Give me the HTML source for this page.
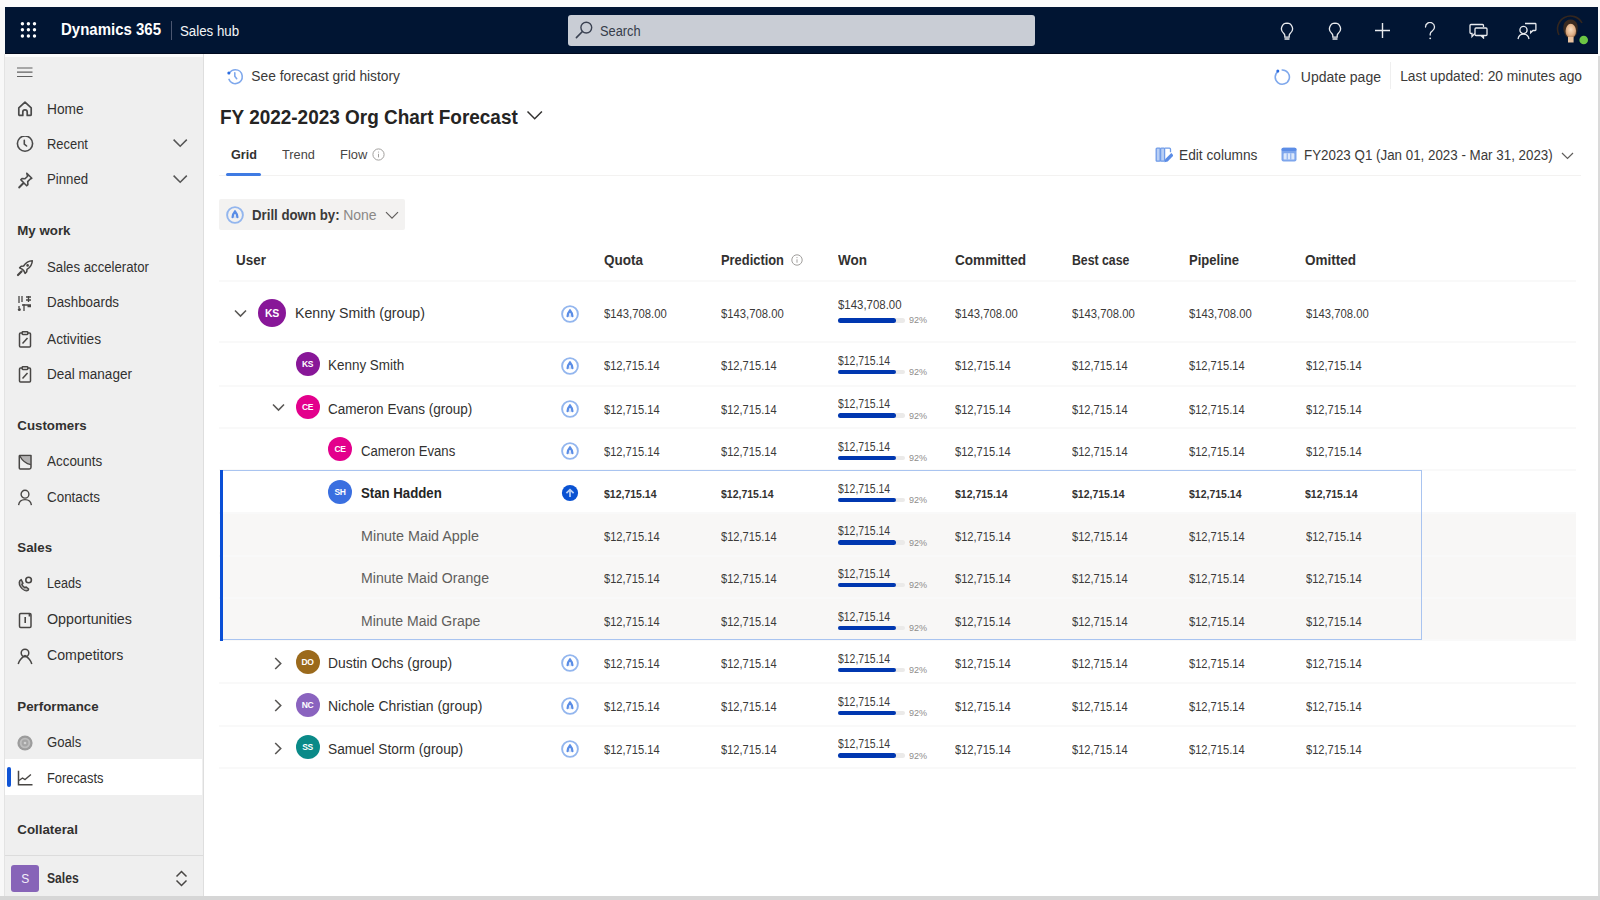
<!DOCTYPE html>
<html><head><meta charset="utf-8"><title>Dynamics 365 Sales hub - Forecast</title>
<style>
html,body{margin:0;padding:0}
body{width:1600px;height:900px;position:relative;overflow:hidden;background:#ffffff;font-family:"Liberation Sans",sans-serif}
.t{position:absolute;white-space:nowrap;line-height:normal;font-family:"Liberation Sans",sans-serif}
.r{position:absolute;display:block}
.av{position:absolute;border-radius:50%;color:#fff;text-align:center;font-family:"Liberation Sans",sans-serif;font-weight:700;letter-spacing:-0.4px}
</style></head><body>
<div class="r" style="left:1598.00px;top:0.00px;width:2.00px;height:56.00px;background:#fafafa;"></div>
<div class="r" style="left:1597.80px;top:56.00px;width:2.20px;height:844.00px;background:#dadada;"></div>
<div class="r" style="left:0.00px;top:896.00px;width:1600.00px;height:4.00px;background:#d6d6d6;"></div>
<div class="r" style="left:0.00px;top:0.00px;width:5.00px;height:896.00px;background:#f8f8f8;"></div>
<div class="r" style="left:0.00px;top:0.00px;width:1600.00px;height:7.00px;background:#fafafa;"></div>
<div class="r" style="left:5.00px;top:7.00px;width:1593.00px;height:47.00px;background:#011533;"></div>
<div class="r" style="left:5.00px;top:52.50px;width:1593.00px;height:1.50px;background:#000a1f;"></div>
<svg class="r" style="left:0.00px;top:0.00px;" width="50" height="50" viewBox="0 0 50 50" fill="none"><circle cx="22.4" cy="23.8" r="1.7" fill="#fff"/><circle cx="22.4" cy="29.8" r="1.7" fill="#fff"/><circle cx="22.4" cy="36" r="1.7" fill="#fff"/><circle cx="28.4" cy="23.8" r="1.7" fill="#fff"/><circle cx="28.4" cy="29.8" r="1.7" fill="#fff"/><circle cx="28.4" cy="36" r="1.7" fill="#fff"/><circle cx="34.5" cy="23.8" r="1.7" fill="#fff"/><circle cx="34.5" cy="29.8" r="1.7" fill="#fff"/><circle cx="34.5" cy="36" r="1.7" fill="#fff"/></svg>
<div class="t" style="left:61.30px;top:21.32px;font-size:16px;font-weight:700;color:#ffffff;transform:scaleX(0.937);transform-origin:0 0;">Dynamics 365</div>
<div class="r" style="left:170.50px;top:21.00px;width:1.00px;height:18.50px;background:#4b5670;"></div>
<div class="t" style="left:179.60px;top:23.13px;font-size:14px;font-weight:400;color:#f4f5f7;transform:scaleX(0.95);transform-origin:0 0;">Sales hub</div>
<div class="r" style="left:568.20px;top:14.90px;width:467.00px;height:30.80px;background:#c9cdd5;border-radius:3px"></div>
<svg class="r" style="left:574.00px;top:19.00px;" width="22" height="22" viewBox="0 0 22 22" fill="none"><circle cx="12.3" cy="8.6" r="5.4" stroke="#3b4252" stroke-width="1.4"/><line x1="8.4" y1="12.5" x2="2.4" y2="18.6" stroke="#3b4252" stroke-width="1.6" stroke-linecap="round"/></svg>
<div class="t" style="left:600.10px;top:23.81px;font-size:13.8px;font-weight:400;color:#353c4a;transform:scaleX(0.93);transform-origin:0 0;">Search</div>
<svg class="r" style="left:1279.60px;top:21.50px;" width="14" height="19" viewBox="0 0 14 19" fill="none"><path d="M7 1.2a5.6 5.6 0 0 0-3.4 10c.8.7 1.2 1.5 1.2 2.4v1.6h4.4v-1.6c0-.9.4-1.7 1.2-2.4A5.6 5.6 0 0 0 7 1.2z" stroke="#e8eaee" stroke-width="1.3"/><path d="M5 17h4" stroke="#e8eaee" stroke-width="1.4" stroke-linecap="round"/></svg>
<svg class="r" style="left:1327.50px;top:21.50px;" width="14" height="19" viewBox="0 0 14 19" fill="none"><path d="M7 1.2a5.6 5.6 0 0 0-3.4 10c.8.7 1.2 1.5 1.2 2.4v1.6h4.4v-1.6c0-.9.4-1.7 1.2-2.4A5.6 5.6 0 0 0 7 1.2z" stroke="#e8eaee" stroke-width="1.3"/><path d="M5 17h4" stroke="#e8eaee" stroke-width="1.4" stroke-linecap="round"/></svg>
<svg class="r" style="left:1373.50px;top:21.50px;" width="17" height="17" viewBox="0 0 17 17" fill="none"><path d="M8.5 1v15M1 8.5h15" stroke="#e8eaee" stroke-width="1.4"/></svg>
<svg class="r" style="left:1423.50px;top:21.50px;" width="12" height="18" viewBox="0 0 12 18" fill="none"><path d="M1.5 5a4.5 4.5 0 1 1 7 3.7c-1.3.9-2.3 1.7-2.3 3.3v1" stroke="#e8eaee" stroke-width="1.3" stroke-linecap="round"/><circle cx="6.2" cy="16.3" r=".9" fill="#e8eaee"/></svg>
<svg class="r" style="left:1469.00px;top:22.00px;" width="19" height="17" viewBox="0 0 19 17" fill="none"><path d="M2 2.5h11.5c.6 0 1 .4 1 1V5" stroke="#e8eaee" stroke-width="1.3"/><path d="M2 2.5c-.6 0-1 .4-1 1v7c0 .6.4 1 1 1h1v3l2.8-3" stroke="#e8eaee" stroke-width="1.3"/><rect x="6" y="6" width="12" height="7.5" rx="1" stroke="#e8eaee" stroke-width="1.3"/><path d="M14.5 13.5v2.5l-2.5-2.5" stroke="#e8eaee" stroke-width="1.3"/></svg>
<svg class="r" style="left:1516.50px;top:21.50px;" width="20" height="18" viewBox="0 0 20 18" fill="none"><circle cx="6.5" cy="8" r="3.6" stroke="#e8eaee" stroke-width="1.3"/><path d="M1 17c.6-3 2.8-4.8 5.5-4.8S11.4 14 12 17" stroke="#e8eaee" stroke-width="1.3"/><path d="M8 1.5h10.2c.4 0 .7.3.7.7v5.6c0 .4-.3.7-.7.7H16l-2.3 2.3V8.5" stroke="#e8eaee" stroke-width="1.3"/></svg>
<svg class="r" style="left:1555.00px;top:15.00px;" width="34" height="34" viewBox="0 0 34 34" fill="none"><defs><radialGradient id="fg" cx="50%" cy="40%" r="60%"><stop offset="0" stop-color="#f6dcc0"/><stop offset="0.6" stop-color="#e3b48c"/><stop offset="1" stop-color="#b5845f"/></radialGradient></defs><path d="M4 20A12.8 12.8 0 0 1 27 8" stroke="#33261e" stroke-width="1.6"/><path d="M8.6 10c1-3.8 3.6-5.6 7-5.6s6 1.9 6.8 5.4c.6 2.7.3 6.2-.6 9-1 2.6-3.1 4.6-6.2 4.6s-5.1-2-6.1-4.8C8.3 15.8 8 12.8 8.6 10z" fill="#3a2a20"/><ellipse cx="15.8" cy="16" rx="5.3" ry="7.2" fill="url(#fg)"/><path d="M13 22h5.6v5.5H13z" fill="#e9c29f"/><circle cx="28.7" cy="25" r="5.4" fill="#011533"/><circle cx="28.7" cy="25" r="4.3" fill="#6cc644"/></svg>
<div class="r" style="left:4.00px;top:54.00px;width:1.20px;height:842.00px;background:#e3e3e3;"></div>
<div class="r" style="left:5.00px;top:54.00px;width:198.00px;height:842.00px;background:#efefef;"></div>
<div class="r" style="left:5.00px;top:54.00px;width:198.00px;height:3.00px;background:#fbfbfb;"></div>
<div class="r" style="left:202.60px;top:54.00px;width:1.50px;height:842.00px;background:#dedede;"></div>
<svg class="r" style="left:16.00px;top:66.00px;" width="18" height="13" viewBox="0 0 18 13" fill="none"><path d="M1 2h15.5M1 6.2h15.5M1 10.5h15.5" stroke="#616161" stroke-width="1.2"/></svg>
<div class="t" style="left:47.20px;top:101.51px;font-size:13.8px;font-weight:400;color:#323130;transform:scaleX(0.995);transform-origin:0 0;">Home</div>
<svg class="r" style="left:16.00px;top:100.00px;" width="18" height="18" viewBox="0 0 18 18" fill="none"><path d="M2.8 7.8 9 2.2l6.2 5.6v6.6c0 .6-.4 1-1 1h-3V12a2.2 2.2 0 0 0-4.4 0v3.4H3.8c-.6 0-1-.4-1-1z" stroke="#4a4a4a" stroke-width="1.7" stroke-linejoin="round"/></svg>
<div class="t" style="left:47.20px;top:137.41px;font-size:13.8px;font-weight:400;color:#323130;transform:scaleX(0.936);transform-origin:0 0;">Recent</div>
<svg class="r" style="left:16.00px;top:135.90px;" width="18" height="18" viewBox="0 0 18 18" fill="none"><circle cx="9" cy="7.6" r="7.6" stroke="#4a4a4a" stroke-width="1.6"/><path d="M8.3 4.2v3.9l2.3 1.9" stroke="#4a4a4a" stroke-width="1.6" stroke-linecap="round"/></svg>
<div class="t" style="left:47.20px;top:172.41px;font-size:13.8px;font-weight:400;color:#323130;transform:scaleX(0.958);transform-origin:0 0;">Pinned</div>
<svg class="r" style="left:16.00px;top:170.90px;" width="18" height="18" viewBox="0 0 18 18" fill="none"><path d="M10.8 2.2l5 5-1.5.8-2.6 2.6.2 3-1.2 1.2-2.8-2.8L3.2 16.6l-.2-.2 4.6-4.8-2.8-2.8 1.2-1.2 3 .2 2.6-2.6z" stroke="#4a4a4a" stroke-width="1.6" stroke-linejoin="round"/></svg>
<svg class="r" style="left:172.00px;top:137.80px;" width="17" height="10" viewBox="0 0 17 10" fill="none"><path d="M1.6 1.6l6.6 6.6 6.6-6.6" stroke="#555" stroke-width="1.5"/></svg>
<svg class="r" style="left:172.00px;top:173.60px;" width="17" height="10" viewBox="0 0 17 10" fill="none"><path d="M1.6 1.6l6.6 6.6 6.6-6.6" stroke="#555" stroke-width="1.5"/></svg>
<div class="t" style="left:17.30px;top:223.46px;font-size:13.3px;font-weight:700;color:#323130;">My work</div>
<div class="t" style="left:47.20px;top:260.31px;font-size:13.8px;font-weight:400;color:#323130;transform:scaleX(0.957);transform-origin:0 0;">Sales accelerator</div>
<svg class="r" style="left:16.00px;top:258.80px;" width="18" height="18" viewBox="0 0 18 18" fill="none"><path d="M16.3 1.7c-3.6.1-6.5 1.9-8.7 5.3L5.2 7.3 3.6 8.9l2.5 1.2 1.8 1.8 1.2 2.5 1.6-1.6.3-2.4c3.4-2.2 5.2-5.1 5.3-8.7z" stroke="#484644" stroke-width="1.5" stroke-linejoin="round"/><circle cx="11.6" cy="6.4" r="1.3" fill="#484644"/><path d="M5.5 12.5 2 16" stroke="#484644" stroke-width="2.2" stroke-linecap="round"/></svg>
<div class="t" style="left:47.20px;top:295.31px;font-size:13.8px;font-weight:400;color:#323130;transform:scaleX(0.968);transform-origin:0 0;">Dashboards</div>
<svg class="r" style="left:16.00px;top:293.80px;" width="18" height="18" viewBox="0 0 18 18" fill="none"><path d="M3 2v7M6 2v6M10 3h5M10 6h5M12.5 2v6M6 11h9M3 12v2M8 10v7M11.5 12.5h3.5" stroke="#484644" stroke-width="1.3"/><circle cx="3.3" cy="15.5" r="1.5" fill="#484644"/></svg>
<div class="t" style="left:47.20px;top:331.51px;font-size:13.8px;font-weight:400;color:#323130;transform:scaleX(0.993);transform-origin:0 0;">Activities</div>
<svg class="r" style="left:16.00px;top:330.00px;" width="18" height="18" viewBox="0 0 18 18" fill="none"><path d="M6.2 3H4.5a1 1 0 0 0-1 1v12a1 1 0 0 0 1 1h9a1 1 0 0 0 1-1V4a1 1 0 0 0-1-1h-1.7" stroke="#484644" stroke-width="1.5"/><rect x="6.2" y="1.8" width="5.6" height="2.6" rx=".6" stroke="#484644" stroke-width="1.5"/><path d="M6.5 13.5l5-5.5" stroke="#484644" stroke-width="1.5"/></svg>
<div class="t" style="left:47.20px;top:366.51px;font-size:13.8px;font-weight:400;color:#323130;transform:scaleX(0.98);transform-origin:0 0;">Deal manager</div>
<svg class="r" style="left:16.00px;top:365.00px;" width="18" height="18" viewBox="0 0 18 18" fill="none"><path d="M6.2 3H4.5a1 1 0 0 0-1 1v12a1 1 0 0 0 1 1h9a1 1 0 0 0 1-1V4a1 1 0 0 0-1-1h-1.7" stroke="#484644" stroke-width="1.5"/><rect x="6.2" y="1.8" width="5.6" height="2.6" rx=".6" stroke="#484644" stroke-width="1.5"/><path d="M6.5 13.5l5-5.5" stroke="#484644" stroke-width="1.5"/></svg>
<div class="t" style="left:17.30px;top:417.86px;font-size:13.3px;font-weight:700;color:#323130;">Customers</div>
<div class="t" style="left:47.20px;top:454.01px;font-size:13.8px;font-weight:400;color:#323130;transform:scaleX(0.974);transform-origin:0 0;">Accounts</div>
<svg class="r" style="left:16.00px;top:452.50px;" width="18" height="18" viewBox="0 0 18 18" fill="none"><path d="M3.5 2.5h11.5v11.8c0 1-.6 1.7-1.6 1.7H4.2c-.5 0-.9-.4-.9-.9V3.2z" stroke="#484644" stroke-width="1.5" stroke-linejoin="round"/><path d="M3.8 3c2.4 4.5 6 7.7 11 8.6" stroke="#484644" stroke-width="1.3"/><path d="M4 3.2l10.8.2-.2 8c-4.6-1-8.2-4-10.6-8.2z" fill="#484644" opacity=".35"/></svg>
<div class="t" style="left:47.20px;top:489.71px;font-size:13.8px;font-weight:400;color:#323130;transform:scaleX(0.972);transform-origin:0 0;">Contacts</div>
<svg class="r" style="left:16.00px;top:488.20px;" width="18" height="18" viewBox="0 0 18 18" fill="none"><circle cx="9" cy="6.2" r="3.9" stroke="#484644" stroke-width="1.4"/><path d="M2.6 17.2c.4-3.4 3-5.6 6.4-5.6s6 2.2 6.4 5.6" stroke="#484644" stroke-width="1.4"/></svg>
<div class="t" style="left:17.30px;top:539.96px;font-size:13.3px;font-weight:700;color:#323130;">Sales</div>
<div class="t" style="left:47.20px;top:576.01px;font-size:13.8px;font-weight:400;color:#323130;transform:scaleX(0.912);transform-origin:0 0;">Leads</div>
<svg class="r" style="left:16.00px;top:574.50px;" width="18" height="18" viewBox="0 0 18 18" fill="none"><circle cx="12.6" cy="5" r="2.8" stroke="#484644" stroke-width="1.6"/><path d="M5.2 4.6C3 5.6 2.4 8.6 4.6 11.8s5.4 4.6 7.4 3.6l.6-1.3-2.4-2.2-1.4.7c-1.3-.7-2.3-1.8-2.9-3.1l1.1-1.3z" stroke="#484644" stroke-width="1.4" stroke-linejoin="round" fill="#484644" fill-opacity=".35"/></svg>
<div class="t" style="left:47.20px;top:612.01px;font-size:13.8px;font-weight:400;color:#323130;transform:scaleX(1.035);transform-origin:0 0;">Opportunities</div>
<svg class="r" style="left:16.00px;top:610.50px;" width="18" height="18" viewBox="0 0 18 18" fill="none"><rect x="3.5" y="2.5" width="11.5" height="14" rx="1.2" stroke="#484644" stroke-width="1.5"/><path d="M9.2 6v6" stroke="#484644" stroke-width="1.6"/><path d="M13.5 2.5v3" stroke="#484644" stroke-width="1.8"/></svg>
<div class="t" style="left:47.20px;top:648.21px;font-size:13.8px;font-weight:400;color:#323130;transform:scaleX(1.026);transform-origin:0 0;">Competitors</div>
<svg class="r" style="left:16.00px;top:646.70px;" width="18" height="18" viewBox="0 0 18 18" fill="none"><circle cx="9" cy="6" r="3.8" stroke="#484644" stroke-width="1.5"/><path d="M2.2 17c.9-3.5 3.4-6.2 6.8-8.6M15.8 17c-.9-3.5-3.4-6.2-6.8-8.6" stroke="#484644" stroke-width="1.5"/></svg>
<div class="t" style="left:17.30px;top:698.76px;font-size:13.3px;font-weight:700;color:#323130;">Performance</div>
<div class="t" style="left:47.20px;top:735.01px;font-size:13.8px;font-weight:400;color:#323130;transform:scaleX(0.953);transform-origin:0 0;">Goals</div>
<svg class="r" style="left:16.00px;top:733.50px;" width="18" height="18" viewBox="0 0 18 18" fill="none"><circle cx="9" cy="9" r="7.6" fill="#9c9c9c"/><circle cx="9" cy="9" r="5.3" fill="#bdbdbd"/><circle cx="9" cy="9" r="3.4" fill="#a5a5a5"/><circle cx="9" cy="9" r="1.3" fill="#d0d0d0"/></svg>
<div class="r" style="left:5.00px;top:759.00px;width:197.20px;height:36.00px;background:#ffffff;"></div>
<div class="r" style="left:7.00px;top:766.80px;width:4.00px;height:20.00px;background:#0f54d6;border-radius:2px"></div>
<div class="t" style="left:47.20px;top:770.71px;font-size:13.8px;font-weight:400;color:#323130;transform:scaleX(0.931);transform-origin:0 0;">Forecasts</div>
<svg class="r" style="left:16.00px;top:769.20px;" width="18" height="18" viewBox="0 0 18 18" fill="none"><path d="M2.5 1.8V15.8h14" stroke="#484644" stroke-width="1.5"/><path d="M3 11.5 6.5 9l2.6 1.6 5.8-5.2" stroke="#484644" stroke-width="1.4" stroke-linejoin="round"/></svg>
<div class="t" style="left:17.30px;top:821.71px;font-size:13.3px;font-weight:700;color:#323130;">Collateral</div>
<div class="r" style="left:5.00px;top:855.30px;width:197.60px;height:1.00px;background:#dcdcdc;"></div>
<div class="r" style="left:11.20px;top:864.50px;width:27.50px;height:27.00px;background:#8764b8;border-radius:3px"></div>
<div class="t" style="left:21.20px;top:872.34px;font-size:12px;font-weight:400;color:#f3eefa;">S</div>
<div class="t" style="left:47.00px;top:871.26px;font-size:13.8px;font-weight:700;color:#323130;transform:scaleX(0.88);transform-origin:0 0;">Sales</div>
<svg class="r" style="left:174.50px;top:869.50px;" width="13" height="17" viewBox="0 0 13 17" fill="none"><path d="M1.5 6.5 6.5 1.5l5 5M1.5 10.5l5 5 5-5" stroke="#484644" stroke-width="1.5"/></svg>
<svg class="r" style="left:226.00px;top:66.50px;" width="19" height="19" viewBox="0 0 19 19" fill="none"><path d="M3.2 6.5C4.5 4.3 6.8 2.8 9.3 2.8a6.9 6.9 0 1 1-6.3 9.6" stroke="#7fa8ec" stroke-width="1.6" stroke-linecap="round"/><circle cx="2.8" cy="5.9" r="1.5" fill="#2a6be0"/><path d="M8.8 5.8v3.5l1.9 2.4" stroke="#7fa8ec" stroke-width="1.6" stroke-linecap="round"/></svg>
<div class="t" style="left:251.25px;top:68.76px;font-size:13.8px;font-weight:400;color:#3b3a39;">See forecast grid history</div>
<svg class="r" style="left:1272.50px;top:67.50px;" width="18" height="18" viewBox="0 0 18 18" fill="none"><path d="M5.2 3.3A7.1 7.1 0 1 0 9.2 2" stroke="#7fa8ec" stroke-width="1.6" stroke-linecap="round"/><circle cx="4.8" cy="3" r="1.5" fill="#2a6be0"/></svg>
<div class="t" style="left:1300.80px;top:68.83px;font-size:14px;font-weight:400;color:#3b3a39;">Update page</div>
<div class="r" style="left:1390.30px;top:62.00px;width:1.00px;height:26.70px;background:#efefef;"></div>
<div class="t" style="left:1400.20px;top:69.01px;font-size:13.8px;font-weight:400;color:#3b3a39;">Last updated: 20 minutes ago</div>
<div class="t" style="left:220.25px;top:105.83px;font-size:19.8px;font-weight:700;color:#252423;transform:scaleX(0.958);transform-origin:0 0;">FY 2022-2023 Org Chart Forecast</div>
<svg class="r" style="left:525.50px;top:109.50px;" width="18" height="11" viewBox="0 0 18 11" fill="none"><path d="M1.5 1.5l7.2 7.2 7.2-7.2" stroke="#323130" stroke-width="1.5"/></svg>
<div class="r" style="left:219.00px;top:175.00px;width:1362.00px;height:1.00px;background:#f3f2f1;"></div>
<div class="t" style="left:230.60px;top:147.26px;font-size:13.3px;font-weight:700;color:#323130;transform:scaleX(0.95);transform-origin:0 0;">Grid</div>
<div class="t" style="left:282.25px;top:147.26px;font-size:13.3px;font-weight:400;color:#484644;transform:scaleX(0.96);transform-origin:0 0;">Trend</div>
<div class="t" style="left:340.00px;top:147.26px;font-size:13.3px;font-weight:400;color:#484644;transform:scaleX(0.97);transform-origin:0 0;">Flow</div>
<svg class="r" style="left:372.00px;top:147.50px;" width="13" height="13" viewBox="0 0 13 13" fill="none"><circle cx="6.5" cy="6.5" r="5.6" stroke="#a19f9d" stroke-width="1"/><path d="M6.5 5.8v3.6" stroke="#a19f9d" stroke-width="1"/><circle cx="6.5" cy="4" r=".6" fill="#a19f9d"/></svg>
<div class="r" style="left:225.75px;top:173.00px;width:35.70px;height:3.20px;background:#3f7be3;border-radius:2px"></div>
<svg class="r" style="left:1154.50px;top:146.50px;" width="18" height="18" viewBox="0 0 18 18" fill="none"><rect x="1.2" y="1.2" width="4" height="13" rx=".8" fill="#b9cff5" stroke="#6f9be8" stroke-width="1.3"/><rect x="5.6" y="1.2" width="4" height="13" rx=".8" fill="#b9cff5" stroke="#6f9be8" stroke-width="1.3"/><path d="M10 1.2h4.5a1 1 0 0 1 1 1v3" stroke="#6f9be8" stroke-width="1.3"/><path d="M16.3 6 10.3 12l-.9 3.3 3.3-.9 6-6z" fill="#5b8ce6"/></svg>
<div class="t" style="left:1179.40px;top:147.33px;font-size:14px;font-weight:400;color:#3b3a39;transform:scaleX(0.979);transform-origin:0 0;">Edit columns</div>
<svg class="r" style="left:1281.00px;top:146.50px;" width="16" height="15" viewBox="0 0 16 15" fill="none"><rect x=".5" y=".8" width="15" height="13.7" rx="2" fill="#7ea6ec"/><rect x="0.5" y=".8" width="15" height="3.2" rx="1.5" fill="#5c8de6"/><rect x="2.6" y="6.3" width="10.8" height="6.2" rx=".6" fill="#dce8fb"/><path d="M6.2 6.3v6.2M9.8 6.3v6.2" stroke="#7ea6ec" stroke-width="1"/></svg>
<div class="t" style="left:1303.90px;top:147.33px;font-size:14px;font-weight:400;color:#3b3a39;transform:scaleX(0.954);transform-origin:0 0;">FY2023 Q1 (Jan 01, 2023 - Mar 31, 2023)</div>
<svg class="r" style="left:1560.50px;top:151.50px;" width="13" height="8" viewBox="0 0 13 8" fill="none"><path d="M1 1l5.5 5.5L12 1" stroke="#605e5c" stroke-width="1.2"/></svg>
<div class="r" style="left:219.20px;top:198.50px;width:186.30px;height:31.50px;background:#f3f2f1;border-radius:2px"></div>
<svg class="r" style="left:226.40px;top:205.60px;" width="18" height="18" viewBox="0 0 18 18" fill="none"><circle cx="9" cy="9" r="7.9" stroke="#93b6ee" stroke-width="1.9"/><path d="M6.6 11.2C6.6 8.4 9 5.6 9 5.6S11.4 8.4 11.4 11.2" stroke="#5a8de6" stroke-width="2.3" stroke-linecap="round"/><path d="M9 9.2v3" stroke="#c4d6f5" stroke-width="1.2"/></svg>
<div class="t" style="left:251.70px;top:206.53px;font-size:14px;font-weight:700;color:#3b3a39;transform:scaleX(0.946);transform-origin:0 0;">Drill down by:</div>
<div class="t" style="left:343.20px;top:206.53px;font-size:14px;font-weight:400;color:#8a8886;">None</div>
<svg class="r" style="left:385.00px;top:211.00px;" width="14" height="9" viewBox="0 0 14 9" fill="none"><path d="M1 1.2l6 6 6-6" stroke="#605e5c" stroke-width="1.2"/></svg>
<div class="t" style="left:235.75px;top:252.03px;font-size:14px;font-weight:700;color:#323130;transform:scaleX(0.96);transform-origin:0 0;">User</div>
<div class="t" style="left:603.75px;top:252.03px;font-size:14px;font-weight:700;color:#323130;transform:scaleX(0.965);transform-origin:0 0;">Quota</div>
<div class="t" style="left:721.00px;top:252.03px;font-size:14px;font-weight:700;color:#323130;transform:scaleX(0.92);transform-origin:0 0;">Prediction</div>
<div class="t" style="left:837.50px;top:252.03px;font-size:14px;font-weight:700;color:#323130;transform:scaleX(0.963);transform-origin:0 0;">Won</div>
<div class="t" style="left:954.70px;top:252.03px;font-size:14px;font-weight:700;color:#323130;transform:scaleX(0.971);transform-origin:0 0;">Committed</div>
<div class="t" style="left:1071.70px;top:252.03px;font-size:14px;font-weight:700;color:#323130;transform:scaleX(0.876);transform-origin:0 0;">Best case</div>
<div class="t" style="left:1188.60px;top:252.03px;font-size:14px;font-weight:700;color:#323130;transform:scaleX(0.931);transform-origin:0 0;">Pipeline</div>
<div class="t" style="left:1305.40px;top:252.03px;font-size:14px;font-weight:700;color:#323130;transform:scaleX(0.964);transform-origin:0 0;">Omitted</div>
<svg class="r" style="left:791.00px;top:254.00px;" width="12" height="12" viewBox="0 0 12 12" fill="none"><circle cx="6" cy="6" r="5.2" stroke="#a19f9d" stroke-width="1"/><path d="M6 5.3v3.4" stroke="#a19f9d" stroke-width="1"/><circle cx="6" cy="3.6" r=".6" fill="#a19f9d"/></svg>
<div class="r" style="left:219.00px;top:279.70px;width:1357.00px;height:2.00px;background:#f9f9f9;"></div>
<div class="r" style="left:220.00px;top:512.60px;width:1356.00px;height:127.40px;background:#f8f7f6;"></div>
<div class="r" style="left:219.00px;top:341.40px;width:1357.00px;height:2.00px;background:#f9f9f9;"></div>
<div class="r" style="left:219.00px;top:385.00px;width:1357.00px;height:2.00px;background:#f9f9f9;"></div>
<div class="r" style="left:219.00px;top:427.40px;width:1357.00px;height:2.00px;background:#f9f9f9;"></div>
<div class="r" style="left:219.00px;top:469.40px;width:1357.00px;height:2.00px;background:#f9f9f9;"></div>
<div class="r" style="left:219.00px;top:512.00px;width:1357.00px;height:2.00px;background:#f9f9f9;"></div>
<div class="r" style="left:219.00px;top:554.60px;width:1357.00px;height:2.00px;background:#f9f9f9;"></div>
<div class="r" style="left:219.00px;top:597.20px;width:1357.00px;height:2.00px;background:#f9f9f9;"></div>
<div class="r" style="left:219.00px;top:639.40px;width:1357.00px;height:2.00px;background:#f9f9f9;"></div>
<div class="r" style="left:219.00px;top:682.40px;width:1357.00px;height:2.00px;background:#f9f9f9;"></div>
<div class="r" style="left:219.00px;top:725.00px;width:1357.00px;height:2.00px;background:#f9f9f9;"></div>
<div class="r" style="left:219.00px;top:767.40px;width:1357.00px;height:2.00px;background:#f9f9f9;"></div>
<svg class="r" style="left:234.00px;top:308.50px;" width="13" height="9" viewBox="0 0 13 9" fill="none"><path d="M1 1.5l5.5 5.5L12 1.5" stroke="#5a5856" stroke-width="1.6"/></svg>
<div class="av" style="left:258.00px;top:298.50px;width:28px;height:28px;background:#881798;font-size:10.5px;line-height:29.5px">KS</div>
<div class="t" style="left:294.75px;top:304.83px;font-size:14px;font-weight:400;color:#323130;transform:scaleX(1.012);transform-origin:0 0;">Kenny Smith (group)</div>
<svg class="r" style="left:561.40px;top:304.60px;" width="18" height="18" viewBox="0 0 18 18" fill="none"><circle cx="9" cy="9" r="7.9" stroke="#93b6ee" stroke-width="1.9"/><path d="M6.6 11.2C6.6 8.4 9 5.6 9 5.6S11.4 8.4 11.4 11.2" stroke="#5a8de6" stroke-width="2.3" stroke-linecap="round"/><path d="M9 9.2v3" stroke="#c4d6f5" stroke-width="1.2"/></svg>
<div class="t" style="left:603.75px;top:307.14px;font-size:12px;font-weight:400;color:#3b3a39;transform:scaleX(0.9400299850074962);transform-origin:0 0;">$143,708.00</div>
<div class="t" style="left:721.00px;top:307.14px;font-size:12px;font-weight:400;color:#3b3a39;transform:scaleX(0.9400299850074962);transform-origin:0 0;">$143,708.00</div>
<div class="t" style="left:837.50px;top:297.89px;font-size:12px;font-weight:400;color:#3b3a39;transform:scaleX(0.952);transform-origin:0 0;">$143,708.00</div>
<div class="r" style="left:837.50px;top:318.00px;width:67.00px;height:4.60px;background:#ebeae9;border-radius:3px"></div>
<div class="r" style="left:837.50px;top:318.00px;width:58.30px;height:4.60px;background:#0037b0;border-radius:3px"></div>
<div class="t" style="left:909.00px;top:314.20px;font-size:9.5px;font-weight:400;color:#8f8d8b;transform:scaleX(0.95);transform-origin:0 0;">92%</div>
<div class="t" style="left:954.70px;top:307.14px;font-size:12px;font-weight:400;color:#3b3a39;transform:scaleX(0.9400299850074962);transform-origin:0 0;">$143,708.00</div>
<div class="t" style="left:1071.70px;top:307.14px;font-size:12px;font-weight:400;color:#3b3a39;transform:scaleX(0.9400299850074962);transform-origin:0 0;">$143,708.00</div>
<div class="t" style="left:1188.60px;top:307.14px;font-size:12px;font-weight:400;color:#3b3a39;transform:scaleX(0.9400299850074962);transform-origin:0 0;">$143,708.00</div>
<div class="t" style="left:1306.20px;top:307.14px;font-size:12px;font-weight:400;color:#3b3a39;transform:scaleX(0.9400299850074962);transform-origin:0 0;">$143,708.00</div>
<div class="av" style="left:295.50px;top:352.10px;width:24px;height:24px;background:#881798;font-size:8.5px;line-height:25.5px">KS</div>
<div class="t" style="left:328.00px;top:356.93px;font-size:14px;font-weight:400;color:#323130;transform:scaleX(0.96);transform-origin:0 0;">Kenny Smith</div>
<svg class="r" style="left:561.40px;top:356.70px;" width="18" height="18" viewBox="0 0 18 18" fill="none"><circle cx="9" cy="9" r="7.9" stroke="#93b6ee" stroke-width="1.9"/><path d="M6.6 11.2C6.6 8.4 9 5.6 9 5.6S11.4 8.4 11.4 11.2" stroke="#5a8de6" stroke-width="2.3" stroke-linecap="round"/><path d="M9 9.2v3" stroke="#c4d6f5" stroke-width="1.2"/></svg>
<div class="t" style="left:603.75px;top:359.14px;font-size:12px;font-weight:400;color:#3b3a39;transform:scaleX(0.9251247920133111);transform-origin:0 0;">$12,715.14</div>
<div class="t" style="left:721.00px;top:359.14px;font-size:12px;font-weight:400;color:#3b3a39;transform:scaleX(0.9251247920133111);transform-origin:0 0;">$12,715.14</div>
<div class="t" style="left:837.50px;top:353.84px;font-size:12px;font-weight:400;color:#3b3a39;transform:scaleX(0.868);transform-origin:0 0;">$12,715.14</div>
<div class="r" style="left:837.50px;top:369.70px;width:67.00px;height:4.60px;background:#ebeae9;border-radius:3px"></div>
<div class="r" style="left:837.50px;top:369.70px;width:58.30px;height:4.60px;background:#0037b0;border-radius:3px"></div>
<div class="t" style="left:909.00px;top:365.90px;font-size:9.5px;font-weight:400;color:#8f8d8b;transform:scaleX(0.95);transform-origin:0 0;">92%</div>
<div class="t" style="left:954.70px;top:359.14px;font-size:12px;font-weight:400;color:#3b3a39;transform:scaleX(0.9251247920133111);transform-origin:0 0;">$12,715.14</div>
<div class="t" style="left:1071.70px;top:359.14px;font-size:12px;font-weight:400;color:#3b3a39;transform:scaleX(0.9251247920133111);transform-origin:0 0;">$12,715.14</div>
<div class="t" style="left:1188.60px;top:359.14px;font-size:12px;font-weight:400;color:#3b3a39;transform:scaleX(0.9251247920133111);transform-origin:0 0;">$12,715.14</div>
<div class="t" style="left:1306.20px;top:359.14px;font-size:12px;font-weight:400;color:#3b3a39;transform:scaleX(0.9251247920133111);transform-origin:0 0;">$12,715.14</div>
<svg class="r" style="left:271.50px;top:403.10px;" width="13" height="9" viewBox="0 0 13 9" fill="none"><path d="M1 1.5l5.5 5.5L12 1.5" stroke="#5a5856" stroke-width="1.6"/></svg>
<div class="av" style="left:295.50px;top:395.10px;width:24px;height:24px;background:#e3008c;font-size:8.5px;line-height:25.5px">CE</div>
<div class="t" style="left:328.00px;top:400.53px;font-size:14px;font-weight:400;color:#323130;transform:scaleX(0.966);transform-origin:0 0;">Cameron Evans (group)</div>
<svg class="r" style="left:561.40px;top:399.70px;" width="18" height="18" viewBox="0 0 18 18" fill="none"><circle cx="9" cy="9" r="7.9" stroke="#93b6ee" stroke-width="1.9"/><path d="M6.6 11.2C6.6 8.4 9 5.6 9 5.6S11.4 8.4 11.4 11.2" stroke="#5a8de6" stroke-width="2.3" stroke-linecap="round"/><path d="M9 9.2v3" stroke="#c4d6f5" stroke-width="1.2"/></svg>
<div class="t" style="left:603.75px;top:402.74px;font-size:12px;font-weight:400;color:#3b3a39;transform:scaleX(0.9251247920133111);transform-origin:0 0;">$12,715.14</div>
<div class="t" style="left:721.00px;top:402.74px;font-size:12px;font-weight:400;color:#3b3a39;transform:scaleX(0.9251247920133111);transform-origin:0 0;">$12,715.14</div>
<div class="t" style="left:837.50px;top:397.44px;font-size:12px;font-weight:400;color:#3b3a39;transform:scaleX(0.868);transform-origin:0 0;">$12,715.14</div>
<div class="r" style="left:837.50px;top:413.30px;width:67.00px;height:4.60px;background:#ebeae9;border-radius:3px"></div>
<div class="r" style="left:837.50px;top:413.30px;width:58.30px;height:4.60px;background:#0037b0;border-radius:3px"></div>
<div class="t" style="left:909.00px;top:409.50px;font-size:9.5px;font-weight:400;color:#8f8d8b;transform:scaleX(0.95);transform-origin:0 0;">92%</div>
<div class="t" style="left:954.70px;top:402.74px;font-size:12px;font-weight:400;color:#3b3a39;transform:scaleX(0.9251247920133111);transform-origin:0 0;">$12,715.14</div>
<div class="t" style="left:1071.70px;top:402.74px;font-size:12px;font-weight:400;color:#3b3a39;transform:scaleX(0.9251247920133111);transform-origin:0 0;">$12,715.14</div>
<div class="t" style="left:1188.60px;top:402.74px;font-size:12px;font-weight:400;color:#3b3a39;transform:scaleX(0.9251247920133111);transform-origin:0 0;">$12,715.14</div>
<div class="t" style="left:1306.20px;top:402.74px;font-size:12px;font-weight:400;color:#3b3a39;transform:scaleX(0.9251247920133111);transform-origin:0 0;">$12,715.14</div>
<div class="av" style="left:328.00px;top:437.30px;width:24px;height:24px;background:#e3008c;font-size:8.5px;line-height:25.5px">CE</div>
<div class="t" style="left:360.50px;top:442.93px;font-size:14px;font-weight:400;color:#323130;transform:scaleX(0.939);transform-origin:0 0;">Cameron Evans</div>
<svg class="r" style="left:561.40px;top:441.90px;" width="18" height="18" viewBox="0 0 18 18" fill="none"><circle cx="9" cy="9" r="7.9" stroke="#93b6ee" stroke-width="1.9"/><path d="M6.6 11.2C6.6 8.4 9 5.6 9 5.6S11.4 8.4 11.4 11.2" stroke="#5a8de6" stroke-width="2.3" stroke-linecap="round"/><path d="M9 9.2v3" stroke="#c4d6f5" stroke-width="1.2"/></svg>
<div class="t" style="left:603.75px;top:445.14px;font-size:12px;font-weight:400;color:#3b3a39;transform:scaleX(0.9251247920133111);transform-origin:0 0;">$12,715.14</div>
<div class="t" style="left:721.00px;top:445.14px;font-size:12px;font-weight:400;color:#3b3a39;transform:scaleX(0.9251247920133111);transform-origin:0 0;">$12,715.14</div>
<div class="t" style="left:837.50px;top:439.84px;font-size:12px;font-weight:400;color:#3b3a39;transform:scaleX(0.868);transform-origin:0 0;">$12,715.14</div>
<div class="r" style="left:837.50px;top:455.70px;width:67.00px;height:4.60px;background:#ebeae9;border-radius:3px"></div>
<div class="r" style="left:837.50px;top:455.70px;width:58.30px;height:4.60px;background:#0037b0;border-radius:3px"></div>
<div class="t" style="left:909.00px;top:451.90px;font-size:9.5px;font-weight:400;color:#8f8d8b;transform:scaleX(0.95);transform-origin:0 0;">92%</div>
<div class="t" style="left:954.70px;top:445.14px;font-size:12px;font-weight:400;color:#3b3a39;transform:scaleX(0.9251247920133111);transform-origin:0 0;">$12,715.14</div>
<div class="t" style="left:1071.70px;top:445.14px;font-size:12px;font-weight:400;color:#3b3a39;transform:scaleX(0.9251247920133111);transform-origin:0 0;">$12,715.14</div>
<div class="t" style="left:1188.60px;top:445.14px;font-size:12px;font-weight:400;color:#3b3a39;transform:scaleX(0.9251247920133111);transform-origin:0 0;">$12,715.14</div>
<div class="t" style="left:1306.20px;top:445.14px;font-size:12px;font-weight:400;color:#3b3a39;transform:scaleX(0.9251247920133111);transform-origin:0 0;">$12,715.14</div>
<div class="av" style="left:328.00px;top:479.60px;width:24px;height:24px;background:#3a6fe0;font-size:8.5px;line-height:25.5px">SH</div>
<div class="t" style="left:360.50px;top:484.93px;font-size:14px;font-weight:700;color:#242424;transform:scaleX(0.944);transform-origin:0 0;">Stan Hadden</div>
<svg class="r" style="left:561.40px;top:484.20px;" width="18" height="18" viewBox="0 0 18 18" fill="none"><circle cx="9" cy="9" r="8.1" fill="#0a52d2"/><path d="M9 13V6M5.4 9.2 9 5.6l3.6 3.6" stroke="#b9d0f5" stroke-width="1.7"/></svg>
<div class="t" style="left:603.75px;top:487.59px;font-size:11.5px;font-weight:700;color:#323130;transform:scaleX(0.9114583333333333);transform-origin:0 0;">$12,715.14</div>
<div class="t" style="left:721.00px;top:487.59px;font-size:11.5px;font-weight:700;color:#323130;transform:scaleX(0.9114583333333333);transform-origin:0 0;">$12,715.14</div>
<div class="t" style="left:837.50px;top:481.84px;font-size:12px;font-weight:400;color:#3b3a39;transform:scaleX(0.868);transform-origin:0 0;">$12,715.14</div>
<div class="r" style="left:837.50px;top:497.70px;width:67.00px;height:4.60px;background:#ebeae9;border-radius:3px"></div>
<div class="r" style="left:837.50px;top:497.70px;width:58.30px;height:4.60px;background:#0037b0;border-radius:3px"></div>
<div class="t" style="left:909.00px;top:493.90px;font-size:9.5px;font-weight:400;color:#8f8d8b;transform:scaleX(0.95);transform-origin:0 0;">92%</div>
<div class="t" style="left:954.70px;top:487.59px;font-size:11.5px;font-weight:700;color:#323130;transform:scaleX(0.9114583333333333);transform-origin:0 0;">$12,715.14</div>
<div class="t" style="left:1071.70px;top:487.59px;font-size:11.5px;font-weight:700;color:#323130;transform:scaleX(0.9114583333333333);transform-origin:0 0;">$12,715.14</div>
<div class="t" style="left:1188.60px;top:487.59px;font-size:11.5px;font-weight:700;color:#323130;transform:scaleX(0.9114583333333333);transform-origin:0 0;">$12,715.14</div>
<div class="t" style="left:1305.40px;top:487.59px;font-size:11.5px;font-weight:700;color:#323130;transform:scaleX(0.9114583333333333);transform-origin:0 0;">$12,715.14</div>
<div class="t" style="left:360.50px;top:527.53px;font-size:14px;font-weight:400;color:#605e5c;transform:scaleX(1.024);transform-origin:0 0;">Minute Maid Apple</div>
<div class="t" style="left:603.75px;top:529.74px;font-size:12px;font-weight:400;color:#3b3a39;transform:scaleX(0.9251247920133111);transform-origin:0 0;">$12,715.14</div>
<div class="t" style="left:721.00px;top:529.74px;font-size:12px;font-weight:400;color:#3b3a39;transform:scaleX(0.9251247920133111);transform-origin:0 0;">$12,715.14</div>
<div class="t" style="left:837.50px;top:524.44px;font-size:12px;font-weight:400;color:#3b3a39;transform:scaleX(0.868);transform-origin:0 0;">$12,715.14</div>
<div class="r" style="left:837.50px;top:540.30px;width:67.00px;height:4.60px;background:#ebeae9;border-radius:3px"></div>
<div class="r" style="left:837.50px;top:540.30px;width:58.30px;height:4.60px;background:#0037b0;border-radius:3px"></div>
<div class="t" style="left:909.00px;top:536.50px;font-size:9.5px;font-weight:400;color:#8f8d8b;transform:scaleX(0.95);transform-origin:0 0;">92%</div>
<div class="t" style="left:954.70px;top:529.74px;font-size:12px;font-weight:400;color:#3b3a39;transform:scaleX(0.9251247920133111);transform-origin:0 0;">$12,715.14</div>
<div class="t" style="left:1071.70px;top:529.74px;font-size:12px;font-weight:400;color:#3b3a39;transform:scaleX(0.9251247920133111);transform-origin:0 0;">$12,715.14</div>
<div class="t" style="left:1188.60px;top:529.74px;font-size:12px;font-weight:400;color:#3b3a39;transform:scaleX(0.9251247920133111);transform-origin:0 0;">$12,715.14</div>
<div class="t" style="left:1306.20px;top:529.74px;font-size:12px;font-weight:400;color:#3b3a39;transform:scaleX(0.9251247920133111);transform-origin:0 0;">$12,715.14</div>
<div class="t" style="left:360.50px;top:570.13px;font-size:14px;font-weight:400;color:#605e5c;transform:scaleX(1.009);transform-origin:0 0;">Minute Maid Orange</div>
<div class="t" style="left:603.75px;top:572.34px;font-size:12px;font-weight:400;color:#3b3a39;transform:scaleX(0.9251247920133111);transform-origin:0 0;">$12,715.14</div>
<div class="t" style="left:721.00px;top:572.34px;font-size:12px;font-weight:400;color:#3b3a39;transform:scaleX(0.9251247920133111);transform-origin:0 0;">$12,715.14</div>
<div class="t" style="left:837.50px;top:567.04px;font-size:12px;font-weight:400;color:#3b3a39;transform:scaleX(0.868);transform-origin:0 0;">$12,715.14</div>
<div class="r" style="left:837.50px;top:582.90px;width:67.00px;height:4.60px;background:#ebeae9;border-radius:3px"></div>
<div class="r" style="left:837.50px;top:582.90px;width:58.30px;height:4.60px;background:#0037b0;border-radius:3px"></div>
<div class="t" style="left:909.00px;top:579.10px;font-size:9.5px;font-weight:400;color:#8f8d8b;transform:scaleX(0.95);transform-origin:0 0;">92%</div>
<div class="t" style="left:954.70px;top:572.34px;font-size:12px;font-weight:400;color:#3b3a39;transform:scaleX(0.9251247920133111);transform-origin:0 0;">$12,715.14</div>
<div class="t" style="left:1071.70px;top:572.34px;font-size:12px;font-weight:400;color:#3b3a39;transform:scaleX(0.9251247920133111);transform-origin:0 0;">$12,715.14</div>
<div class="t" style="left:1188.60px;top:572.34px;font-size:12px;font-weight:400;color:#3b3a39;transform:scaleX(0.9251247920133111);transform-origin:0 0;">$12,715.14</div>
<div class="t" style="left:1306.20px;top:572.34px;font-size:12px;font-weight:400;color:#3b3a39;transform:scaleX(0.9251247920133111);transform-origin:0 0;">$12,715.14</div>
<div class="t" style="left:360.50px;top:612.73px;font-size:14px;font-weight:400;color:#605e5c;transform:scaleX(1.002);transform-origin:0 0;">Minute Maid Grape</div>
<div class="t" style="left:603.75px;top:614.94px;font-size:12px;font-weight:400;color:#3b3a39;transform:scaleX(0.9251247920133111);transform-origin:0 0;">$12,715.14</div>
<div class="t" style="left:721.00px;top:614.94px;font-size:12px;font-weight:400;color:#3b3a39;transform:scaleX(0.9251247920133111);transform-origin:0 0;">$12,715.14</div>
<div class="t" style="left:837.50px;top:609.64px;font-size:12px;font-weight:400;color:#3b3a39;transform:scaleX(0.868);transform-origin:0 0;">$12,715.14</div>
<div class="r" style="left:837.50px;top:625.50px;width:67.00px;height:4.60px;background:#ebeae9;border-radius:3px"></div>
<div class="r" style="left:837.50px;top:625.50px;width:58.30px;height:4.60px;background:#0037b0;border-radius:3px"></div>
<div class="t" style="left:909.00px;top:621.70px;font-size:9.5px;font-weight:400;color:#8f8d8b;transform:scaleX(0.95);transform-origin:0 0;">92%</div>
<div class="t" style="left:954.70px;top:614.94px;font-size:12px;font-weight:400;color:#3b3a39;transform:scaleX(0.9251247920133111);transform-origin:0 0;">$12,715.14</div>
<div class="t" style="left:1071.70px;top:614.94px;font-size:12px;font-weight:400;color:#3b3a39;transform:scaleX(0.9251247920133111);transform-origin:0 0;">$12,715.14</div>
<div class="t" style="left:1188.60px;top:614.94px;font-size:12px;font-weight:400;color:#3b3a39;transform:scaleX(0.9251247920133111);transform-origin:0 0;">$12,715.14</div>
<div class="t" style="left:1306.20px;top:614.94px;font-size:12px;font-weight:400;color:#3b3a39;transform:scaleX(0.9251247920133111);transform-origin:0 0;">$12,715.14</div>
<svg class="r" style="left:274.00px;top:656.60px;" width="8" height="13" viewBox="0 0 8 13" fill="none"><path d="M1.2 1l5.5 5.5L1.2 12" stroke="#5a5856" stroke-width="1.6"/></svg>
<div class="av" style="left:295.50px;top:649.80px;width:24px;height:24px;background:#9b6a1c;font-size:8.5px;line-height:25.5px">DO</div>
<div class="t" style="left:328.00px;top:654.93px;font-size:14px;font-weight:400;color:#323130;transform:scaleX(0.99);transform-origin:0 0;">Dustin Ochs (group)</div>
<svg class="r" style="left:561.40px;top:654.40px;" width="18" height="18" viewBox="0 0 18 18" fill="none"><circle cx="9" cy="9" r="7.9" stroke="#93b6ee" stroke-width="1.9"/><path d="M6.6 11.2C6.6 8.4 9 5.6 9 5.6S11.4 8.4 11.4 11.2" stroke="#5a8de6" stroke-width="2.3" stroke-linecap="round"/><path d="M9 9.2v3" stroke="#c4d6f5" stroke-width="1.2"/></svg>
<div class="t" style="left:603.75px;top:657.14px;font-size:12px;font-weight:400;color:#3b3a39;transform:scaleX(0.9251247920133111);transform-origin:0 0;">$12,715.14</div>
<div class="t" style="left:721.00px;top:657.14px;font-size:12px;font-weight:400;color:#3b3a39;transform:scaleX(0.9251247920133111);transform-origin:0 0;">$12,715.14</div>
<div class="t" style="left:837.50px;top:651.84px;font-size:12px;font-weight:400;color:#3b3a39;transform:scaleX(0.868);transform-origin:0 0;">$12,715.14</div>
<div class="r" style="left:837.50px;top:667.70px;width:67.00px;height:4.60px;background:#ebeae9;border-radius:3px"></div>
<div class="r" style="left:837.50px;top:667.70px;width:58.30px;height:4.60px;background:#0037b0;border-radius:3px"></div>
<div class="t" style="left:909.00px;top:663.90px;font-size:9.5px;font-weight:400;color:#8f8d8b;transform:scaleX(0.95);transform-origin:0 0;">92%</div>
<div class="t" style="left:954.70px;top:657.14px;font-size:12px;font-weight:400;color:#3b3a39;transform:scaleX(0.9251247920133111);transform-origin:0 0;">$12,715.14</div>
<div class="t" style="left:1071.70px;top:657.14px;font-size:12px;font-weight:400;color:#3b3a39;transform:scaleX(0.9251247920133111);transform-origin:0 0;">$12,715.14</div>
<div class="t" style="left:1188.60px;top:657.14px;font-size:12px;font-weight:400;color:#3b3a39;transform:scaleX(0.9251247920133111);transform-origin:0 0;">$12,715.14</div>
<div class="t" style="left:1306.20px;top:657.14px;font-size:12px;font-weight:400;color:#3b3a39;transform:scaleX(0.9251247920133111);transform-origin:0 0;">$12,715.14</div>
<svg class="r" style="left:274.00px;top:699.40px;" width="8" height="13" viewBox="0 0 8 13" fill="none"><path d="M1.2 1l5.5 5.5L1.2 12" stroke="#5a5856" stroke-width="1.6"/></svg>
<div class="av" style="left:295.50px;top:692.60px;width:24px;height:24px;background:#8a63bf;font-size:8.5px;line-height:25.5px">NC</div>
<div class="t" style="left:328.00px;top:697.93px;font-size:14px;font-weight:400;color:#323130;transform:scaleX(0.997);transform-origin:0 0;">Nichole Christian (group)</div>
<svg class="r" style="left:561.40px;top:697.20px;" width="18" height="18" viewBox="0 0 18 18" fill="none"><circle cx="9" cy="9" r="7.9" stroke="#93b6ee" stroke-width="1.9"/><path d="M6.6 11.2C6.6 8.4 9 5.6 9 5.6S11.4 8.4 11.4 11.2" stroke="#5a8de6" stroke-width="2.3" stroke-linecap="round"/><path d="M9 9.2v3" stroke="#c4d6f5" stroke-width="1.2"/></svg>
<div class="t" style="left:603.75px;top:700.14px;font-size:12px;font-weight:400;color:#3b3a39;transform:scaleX(0.9251247920133111);transform-origin:0 0;">$12,715.14</div>
<div class="t" style="left:721.00px;top:700.14px;font-size:12px;font-weight:400;color:#3b3a39;transform:scaleX(0.9251247920133111);transform-origin:0 0;">$12,715.14</div>
<div class="t" style="left:837.50px;top:694.84px;font-size:12px;font-weight:400;color:#3b3a39;transform:scaleX(0.868);transform-origin:0 0;">$12,715.14</div>
<div class="r" style="left:837.50px;top:710.70px;width:67.00px;height:4.60px;background:#ebeae9;border-radius:3px"></div>
<div class="r" style="left:837.50px;top:710.70px;width:58.30px;height:4.60px;background:#0037b0;border-radius:3px"></div>
<div class="t" style="left:909.00px;top:706.90px;font-size:9.5px;font-weight:400;color:#8f8d8b;transform:scaleX(0.95);transform-origin:0 0;">92%</div>
<div class="t" style="left:954.70px;top:700.14px;font-size:12px;font-weight:400;color:#3b3a39;transform:scaleX(0.9251247920133111);transform-origin:0 0;">$12,715.14</div>
<div class="t" style="left:1071.70px;top:700.14px;font-size:12px;font-weight:400;color:#3b3a39;transform:scaleX(0.9251247920133111);transform-origin:0 0;">$12,715.14</div>
<div class="t" style="left:1188.60px;top:700.14px;font-size:12px;font-weight:400;color:#3b3a39;transform:scaleX(0.9251247920133111);transform-origin:0 0;">$12,715.14</div>
<div class="t" style="left:1306.20px;top:700.14px;font-size:12px;font-weight:400;color:#3b3a39;transform:scaleX(0.9251247920133111);transform-origin:0 0;">$12,715.14</div>
<svg class="r" style="left:274.00px;top:741.90px;" width="8" height="13" viewBox="0 0 8 13" fill="none"><path d="M1.2 1l5.5 5.5L1.2 12" stroke="#5a5856" stroke-width="1.6"/></svg>
<div class="av" style="left:295.50px;top:735.10px;width:24px;height:24px;background:#0a8a88;font-size:8.5px;line-height:25.5px">SS</div>
<div class="t" style="left:328.00px;top:740.53px;font-size:14px;font-weight:400;color:#323130;transform:scaleX(0.98);transform-origin:0 0;">Samuel Storm (group)</div>
<svg class="r" style="left:561.40px;top:739.70px;" width="18" height="18" viewBox="0 0 18 18" fill="none"><circle cx="9" cy="9" r="7.9" stroke="#93b6ee" stroke-width="1.9"/><path d="M6.6 11.2C6.6 8.4 9 5.6 9 5.6S11.4 8.4 11.4 11.2" stroke="#5a8de6" stroke-width="2.3" stroke-linecap="round"/><path d="M9 9.2v3" stroke="#c4d6f5" stroke-width="1.2"/></svg>
<div class="t" style="left:603.75px;top:742.74px;font-size:12px;font-weight:400;color:#3b3a39;transform:scaleX(0.9251247920133111);transform-origin:0 0;">$12,715.14</div>
<div class="t" style="left:721.00px;top:742.74px;font-size:12px;font-weight:400;color:#3b3a39;transform:scaleX(0.9251247920133111);transform-origin:0 0;">$12,715.14</div>
<div class="t" style="left:837.50px;top:737.44px;font-size:12px;font-weight:400;color:#3b3a39;transform:scaleX(0.868);transform-origin:0 0;">$12,715.14</div>
<div class="r" style="left:837.50px;top:753.30px;width:67.00px;height:4.60px;background:#ebeae9;border-radius:3px"></div>
<div class="r" style="left:837.50px;top:753.30px;width:58.30px;height:4.60px;background:#0037b0;border-radius:3px"></div>
<div class="t" style="left:909.00px;top:749.50px;font-size:9.5px;font-weight:400;color:#8f8d8b;transform:scaleX(0.95);transform-origin:0 0;">92%</div>
<div class="t" style="left:954.70px;top:742.74px;font-size:12px;font-weight:400;color:#3b3a39;transform:scaleX(0.9251247920133111);transform-origin:0 0;">$12,715.14</div>
<div class="t" style="left:1071.70px;top:742.74px;font-size:12px;font-weight:400;color:#3b3a39;transform:scaleX(0.9251247920133111);transform-origin:0 0;">$12,715.14</div>
<div class="t" style="left:1188.60px;top:742.74px;font-size:12px;font-weight:400;color:#3b3a39;transform:scaleX(0.9251247920133111);transform-origin:0 0;">$12,715.14</div>
<div class="t" style="left:1306.20px;top:742.74px;font-size:12px;font-weight:400;color:#3b3a39;transform:scaleX(0.9251247920133111);transform-origin:0 0;">$12,715.14</div>
<div class="r" style="left:220.00px;top:470.00px;width:1201.50px;height:170.00px;background:transparent;border:1px solid #a9c4f0;box-sizing:border-box"></div>
<div class="r" style="left:219.80px;top:470.00px;width:3.70px;height:170.50px;background:#0a4fd6;"></div>
</body></html>
